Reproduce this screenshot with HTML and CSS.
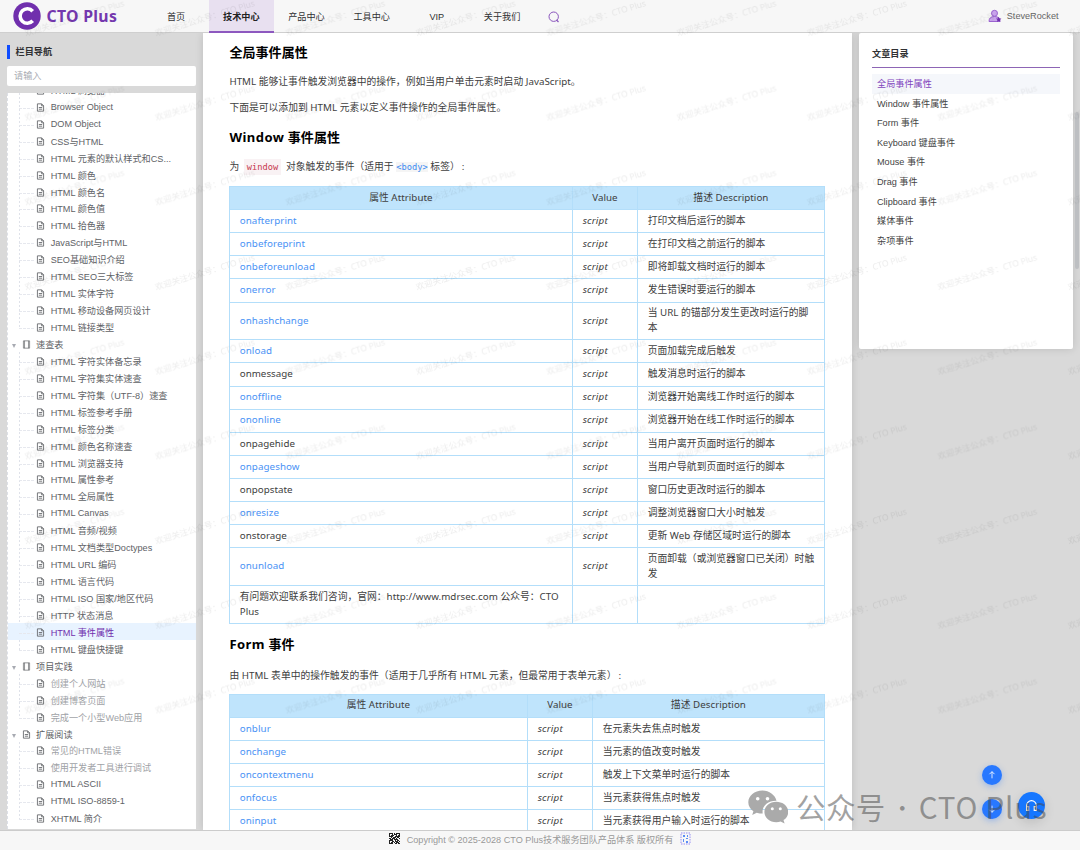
FILE: index.html
```html
<!DOCTYPE html>
<html lang="zh-CN">
<head>
  <meta charset="UTF-8">
  <meta name="viewport" content="width=device-width, initial-scale=1.0">
  <title>HTML 事件属性 - CTO Plus</title>
  <link rel="stylesheet" href="styles.css">
</head>
<body>
<svg class="defs">
  <symbol id="doc" viewBox="0 0 16 16"><path d="M2.5 1.5h7.5l3.5 3.5v9.500h-11zM10 1.500v3.500h3.500M5 8h6M5 11h6" fill="none" stroke="currentColor" stroke-width="1.500"/></symbol>
  <symbol id="book" viewBox="0 0 16 16"><path d="M2.500 1.500h11v13h-11zM4.500 1.500v13M11.500 1.500v13" fill="none" stroke="currentColor" stroke-width="1.200"/></symbol>
</svg>

<header class="header">
  <div class="logo">
    <svg viewBox="0 0 28 28"><circle cx="14" cy="14" r="13.700" fill="#702fad"/><path d="M19.700 9.200A7.200 7.200 0 1 0 19.700 18.800" fill="none" stroke="#fff" stroke-width="3.600"/></svg>
    <span>CTO Plus</span>
  </div>
  <nav class="nav">
    <a>首页</a>
    <a class="active">技术中心</a>
    <a>产品中心</a>
    <a>工具中心</a>
    <a>VIP</a>
    <a>关于我们</a>
  </nav>
  <svg class="search" viewBox="0 0 12 12"><circle cx="5.700" cy="5.700" r="4.700" fill="none" stroke="#8a55bd"/><path d="M8.500 9l2 2" stroke="#8a55bd" stroke-width="1.200"/></svg>
  <div class="user">
    <svg viewBox="0 0 14 14"><path d="M1 13c0-4 2-5.500 5.500-5.500S12 9 12 13z" fill="#c9a3ec"/><path d="M1 12.500c0-3.500 2-5 5.500-5s5.500 1.500 5.500 5z" fill="none" stroke="#9a63cf"/><circle cx="6.500" cy="4.300" r="3" fill="#c9a3ec" stroke="#9a63cf"/><path d="M10.700 7.800l.8 1.600 1.900.2-1.400 1.300.4 1.900-1.700-.9-1.700.9.400-1.900L8 9.600l1.900-.2z" fill="#702fad"/></svg>
    <span>SteveRocket</span>
  </div>
</header>

<div class="page">
  <aside class="sidebar">
    <div class="side-title">栏目导航</div>
    <div class="side-input">请输入</div>
    <div class="tree">
      <div class="tree-inner">
        <div class="group">
          <div class="leaf"><svg><use href="#doc"/></svg>HTML 浏览器</div>
          <div class="leaf"><svg><use href="#doc"/></svg>Browser Object</div>
          <div class="leaf"><svg><use href="#doc"/></svg>DOM Object</div>
          <div class="leaf"><svg><use href="#doc"/></svg>CSS与HTML</div>
          <div class="leaf"><svg><use href="#doc"/></svg>HTML 元素的默认样式和CS...</div>
          <div class="leaf"><svg><use href="#doc"/></svg>HTML 颜色</div>
          <div class="leaf"><svg><use href="#doc"/></svg>HTML 颜色名</div>
          <div class="leaf"><svg><use href="#doc"/></svg>HTML 颜色值</div>
          <div class="leaf"><svg><use href="#doc"/></svg>HTML 拾色器</div>
          <div class="leaf"><svg><use href="#doc"/></svg>JavaScript与HTML</div>
          <div class="leaf"><svg><use href="#doc"/></svg>SEO基础知识介绍</div>
          <div class="leaf"><svg><use href="#doc"/></svg>HTML SEO三大标签</div>
          <div class="leaf"><svg><use href="#doc"/></svg>HTML 实体字符</div>
          <div class="leaf"><svg><use href="#doc"/></svg>HTML 移动设备网页设计</div>
          <div class="leaf"><svg><use href="#doc"/></svg>HTML 链接类型</div>
        </div>
        <div class="branch"><i></i><svg><use href="#book"/></svg>速查表</div>
        <div class="group">
          <div class="leaf"><svg><use href="#doc"/></svg>HTML 字符实体备忘录</div>
          <div class="leaf"><svg><use href="#doc"/></svg>HTML 字符集实体速查</div>
          <div class="leaf"><svg><use href="#doc"/></svg>HTML 字符集（UTF-8）速查</div>
          <div class="leaf"><svg><use href="#doc"/></svg>HTML 标签参考手册</div>
          <div class="leaf"><svg><use href="#doc"/></svg>HTML 标签分类</div>
          <div class="leaf"><svg><use href="#doc"/></svg>HTML 颜色名称速查</div>
          <div class="leaf"><svg><use href="#doc"/></svg>HTML 浏览器支持</div>
          <div class="leaf"><svg><use href="#doc"/></svg>HTML 属性参考</div>
          <div class="leaf"><svg><use href="#doc"/></svg>HTML 全局属性</div>
          <div class="leaf"><svg><use href="#doc"/></svg>HTML Canvas</div>
          <div class="leaf"><svg><use href="#doc"/></svg>HTML 音频/视频</div>
          <div class="leaf"><svg><use href="#doc"/></svg>HTML 文档类型Doctypes</div>
          <div class="leaf"><svg><use href="#doc"/></svg>HTML URL 编码</div>
          <div class="leaf"><svg><use href="#doc"/></svg>HTML 语言代码</div>
          <div class="leaf"><svg><use href="#doc"/></svg>HTML ISO 国家/地区代码</div>
          <div class="leaf"><svg><use href="#doc"/></svg>HTTP 状态消息</div>
          <div class="leaf current"><svg><use href="#doc"/></svg>HTML 事件属性</div>
          <div class="leaf"><svg><use href="#doc"/></svg>HTML 键盘快捷键</div>
        </div>
        <div class="branch"><i></i><svg><use href="#book"/></svg>项目实践</div>
        <div class="group">
          <div class="leaf off"><svg><use href="#doc"/></svg>创建个人网站</div>
          <div class="leaf off"><svg><use href="#doc"/></svg>创建博客页面</div>
          <div class="leaf off"><svg><use href="#doc"/></svg>完成一个小型Web应用</div>
        </div>
        <div class="branch"><i></i><svg><use href="#doc"/></svg>扩展阅读</div>
        <div class="group">
          <div class="leaf off"><svg><use href="#doc"/></svg>常见的HTML错误</div>
          <div class="leaf off"><svg><use href="#doc"/></svg>使用开发者工具进行调试</div>
          <div class="leaf"><svg><use href="#doc"/></svg>HTML ASCII</div>
          <div class="leaf"><svg><use href="#doc"/></svg>HTML ISO-8859-1</div>
          <div class="leaf"><svg><use href="#doc"/></svg>XHTML 简介</div>
        </div>
      </div>
    </div>
  </aside>

  <main class="article">
    <h2>全局事件属性</h2>
    <p>HTML 能够让事件触发浏览器中的操作，例如当用户单击元素时启动 JavaScript。</p>
    <p>下面是可以添加到 HTML 元素以定义事件操作的全局事件属性。</p>
    <h2><span class="latin">Window</span> 事件属性</h2>
    <p>为 <code class="red">window</code> 对象触发的事件（适用于 <code>&lt;body&gt;</code> 标签）<span class="colon">:</span></p>
    <table class="window-table">
      <tr><th class="c1">属性 Attribute</th><th class="c2">Value</th><th>描述 Description</th></tr>
      <tr><td><a>onafterprint</a></td><td><em>script</em></td><td>打印文档后运行的脚本</td></tr>
      <tr><td><a>onbeforeprint</a></td><td><em>script</em></td><td>在打印文档之前运行的脚本</td></tr>
      <tr><td><a>onbeforeunload</a></td><td><em>script</em></td><td>即将卸载文档时运行的脚本</td></tr>
      <tr><td><a>onerror</a></td><td><em>script</em></td><td>发生错误时要运行的脚本</td></tr>
      <tr class="two"><td><a>onhashchange</a></td><td><em>script</em></td><td>当 URL 的锚部分发生更改时运行的脚本</td></tr>
      <tr><td><a>onload</a></td><td><em>script</em></td><td>页面加载完成后触发</td></tr>
      <tr><td>onmessage</td><td><em>script</em></td><td>触发消息时运行的脚本</td></tr>
      <tr><td><a>onoffline</a></td><td><em>script</em></td><td>浏览器开始离线工作时运行的脚本</td></tr>
      <tr><td><a>ononline</a></td><td><em>script</em></td><td>浏览器开始在线工作时运行的脚本</td></tr>
      <tr><td>onpagehide</td><td><em>script</em></td><td>当用户离开页面时运行的脚本</td></tr>
      <tr><td><a>onpageshow</a></td><td><em>script</em></td><td>当用户导航到页面时运行的脚本</td></tr>
      <tr><td>onpopstate</td><td><em>script</em></td><td>窗口历史更改时运行的脚本</td></tr>
      <tr><td><a>onresize</a></td><td><em>script</em></td><td>调整浏览器窗口大小时触发</td></tr>
      <tr><td>onstorage</td><td><em>script</em></td><td>更新 Web 存储区域时运行的脚本</td></tr>
      <tr class="two"><td><a>onunload</a></td><td><em>script</em></td><td>页面卸载（或浏览器窗口已关闭）时触发</td></tr>
      <tr class="two"><td>有问题欢迎联系我们咨询，官网：http://www.mdrsec.com 公众号：CTO Plus</td><td></td><td></td></tr>
    </table>
    <h2><span class="latin">Form</span> 事件</h2>
    <p>由 HTML 表单中的操作触发的事件（适用于几乎所有 HTML 元素，但最常用于表单元素）<span class="colon">:</span></p>
    <table class="form-table">
      <tr><th class="c1">属性 Attribute</th><th class="c2">Value</th><th>描述 Description</th></tr>
      <tr><td><a>onblur</a></td><td><em>script</em></td><td>在元素失去焦点时触发</td></tr>
      <tr><td><a>onchange</a></td><td><em>script</em></td><td>当元素的值改变时触发</td></tr>
      <tr><td><a>oncontextmenu</a></td><td><em>script</em></td><td>触发上下文菜单时运行的脚本</td></tr>
      <tr><td><a>onfocus</a></td><td><em>script</em></td><td>当元素获得焦点时触发</td></tr>
      <tr><td><a>oninput</a></td><td><em>script</em></td><td>当元素获得用户输入时运行的脚本</td></tr>
    </table>
  </main>

  <aside class="toc">
    <h3>文章目录</h3>
    <a class="on">全局事件属性</a>
    <a>Window 事件属性</a>
    <a>Form 事件</a>
    <a>Keyboard 键盘事件</a>
    <a>Mouse 事件</a>
    <a>Drag 事件</a>
    <a>Clipboard 事件</a>
    <a>媒体事件</a>
    <a>杂项事件</a>
  </aside>
  <div class="scrollbar"></div>
</div>

<footer class="footer">
  <svg viewBox="0 0 11 11"><path d="M0 .5h4M5 .5h1M7 .5h4M0 1.500h1M3 1.500h1M5 1.500h3M10 1.500h1M0 2.500h1M2 2.500h3M7 2.500h1M9 2.500h2M0 3.500h4M6 3.500h5M2 4.500h1M4 4.500h3M8 4.500h2M0 5.500h2M3 5.500h3M7 5.500h1M10 5.500h1M1 6.500h3M5 6.500h4M0 7.500h4M6 7.500h1M8 7.500h2M0 8.500h1M3 8.500h2M6 8.500h3M10 8.500h1M0 9.500h1M2 9.500h2M5 9.500h1M7 9.500h3M0 10.500h4M6 10.500h2M9 10.500h2" stroke="#222"/></svg>
  <span>Copyright © 2025-2028 CTO Plus技术服务团队产品体系 版权所有</span>
  <svg viewBox="0 0 11 13"><path d="M1 1h9v11H1z" fill="none" stroke="#968df2" stroke-dasharray="1.500 1"/><path d="M3 3h2v2H3zM7 3h1v2H7zM3 7h1v3H3zM6 6h2v1H6zM6 9h2v2H6z" fill="#5a8df5"/></svg>
</footer>

<svg class="watermark">
  <pattern id="wm" x="5" y="-6" width="130.400" height="84.700" patternUnits="userSpaceOnUse">
    <text x="21" y="42" transform="rotate(-17 21 42)">欢迎关注公众号：CTO Plus</text>
  </pattern>
  <rect width="1080" height="720" fill="url(#wm)"/>
</svg>

<div class="float-btn up"><svg viewBox="0 0 12 12"><path d="M6 10V2M3 5l3-3 3 3"/></svg></div>
<div class="float-btn down"><svg viewBox="0 0 12 12"><path d="M6 2v8M3 7l3 3 3-3"/></svg></div>
<div class="float-btn help"><svg viewBox="0 0 12 12"><path d="M1.500 9V6a4.500 4.500 0 0 1 9 0v3M1.500 7h2v3.500h-2zM8.500 7h2v3.500h-2z"/></svg></div>

<div class="brand">
  <svg viewBox="0 0 40 34"><path d="M14.500.5C6.500.5.3 5.700.3 12.200c0 3.700 2 6.900 5.100 9L4.200 25l4.500-2.300c1.900.6 4 .9 6 .9C13.500 16 20 10.500 28.500 10.700 27 4.800 21.300.5 14.500.5z"/><path d="M28.300 11.800c-6.600 0-11.900 4.500-11.900 10.200s5.300 10.200 11.900 10.200c1.600 0 3-.2 4.300-.7l4 2.100-1.100-3.500c2.900-1.900 4.700-4.800 4.700-8.100 0-5.700-5.300-10.200-11.900-10.200z"/><g fill="#fff"><circle cx="9.700" cy="8.700" r="1.800"/><circle cx="19.500" cy="8.700" r="1.800"/><circle cx="24.300" cy="18.800" r="1.500"/><circle cx="32.300" cy="18.800" r="1.500"/></g></svg>
  <span class="cn">公众号</span><span class="dot">·</span><span class="en">CTO Plus</span>
</div>
</body>
</html>
```
FILE: styles.css
```css
:root {
  --purple: #702fad;
  --line: #b3defa;
  --bg: #d9d9d9;
}
* {
  box-sizing: border-box;
}
body {
  margin: 0;
  width: 1080px;
  height: 850px;
  overflow: hidden;
  display: flex;
  flex-direction: column;
  background: var(--bg);
  font-family: "Liberation Sans", "Noto Sans CJK SC", sans-serif;
  font-size: 9.13px;
  color: #303133;
}
.defs {
  display: none;
}
.header {
  height: 33px;
  flex: none;
  display: flex;
  align-items: center;
  background: #f7f7f7;
  border-bottom: 1px solid #cfcfcf;
  padding-left: 12.5px;
  position: relative;
  z-index: 2;
}
.logo {
  width: 131px;
  display: flex;
  align-items: center;
  gap: 6px;
  font: bold 15.8px/20px "Noto Sans", sans-serif;
  letter-spacing: 0.3px;
  color: #7438ae;
}
.logo svg {
  width: 28px;
  height: 28px;
}
.nav {
  display: flex;
  height: 33px;
}
.nav a {
  width: 65.2px;
  line-height: 34px;
  text-align: center;
}
.nav .active {
  background: #e8e0f0;
  border-bottom: 2px solid #8d58bf;
  font-weight: bold;
  color: #222;
}
.search {
  width: 12px;
  height: 12px;
  margin: 1px 0 0 13px;
}
.user {
  margin-left: auto;
  margin-right: 21.5px;
  display: flex;
  align-items: center;
  gap: 5px;
  color: #666;
}
.user svg {
  width: 14px;
  height: 14px;
}
.page {
  height: 797px;
  display: flex;
  align-items: flex-start;
}
.sidebar {
  width: 203px;
  padding: 12px 7px 0;
}
.side-title {
  height: 14px;
  line-height: 15px;
  border-left: 3px solid #0f4cff;
  padding-left: 5.5px;
  font-weight: bold;
}
.side-input {
  width: 188.5px;
  height: 20px;
  line-height: 21px;
  margin: 7px 0;
  padding-left: 7px;
  background: #fff;
  border-radius: 2px;
  color: #a8abb2;
}
.tree {
  width: 188.5px;
  height: 736px;
  overflow: hidden;
  background: #fff;
  border-left: 1px dashed #dcdfe6;
  color: #606266;
}
.tree-inner {
  margin-top: -11.6px;
}
.leaf, .branch {
  height: 16.95px;
  display: flex;
  align-items: center;
  white-space: nowrap;
}
.leaf svg, .branch svg {
  width: 9px;
  height: 9px;
  flex: none;
  margin: 1px 5.5px 0 0;
}
.group {
  background: repeating-linear-gradient(#dfe2ea 0 2px, transparent 2px 4px) 11px 0 / 1px calc(100% - 7px) no-repeat;
}
.leaf::before {
  content: "";
  width: 15px;
  margin: 3px 2px 0 11.2px;
  border-top: 1px dashed #e6e8ee;
}
.current {
  background: #e8f3ff;
  color: var(--purple);
}
.current svg {
  color: #606266;
}
.off {
  color: #a0a2a6;
}
.off svg {
  color: #606266;
}
.branch i {
  border: 2.5px solid transparent;
  border-top: 4px solid #a8abb2;
  border-bottom: 0;
  margin: 4px 6px 0 4px;
}
.branch svg {
  margin-right: 5px;
}
.article {
  width: 649px;
  height: 797px;
  overflow: hidden;
  padding: 10px 27px 0 26.4px;
  background: #fff;
  font-family: "Noto Sans", "Noto Sans CJK SC", sans-serif;
  font-size: 9.78px;
  letter-spacing: 0.03px;
  color: #404040;
  box-shadow: 0 0 8px rgba(0,0,0,0.13);
}
.article h2 {
  margin: 0 0 13px;
  font-size: 13.04px;
  line-height: 18px;
  color: #000;
}
.latin {
  letter-spacing: 0.45px;
}
.article p {
  margin: 0 0 11px;
  line-height: 15px;
}
.article p + h2 {
  margin-top: 13px;
}
.colon {
  margin-left: 2px;
}
code {
  font-family: "DejaVu Sans Mono", monospace;
  font-size: 8.7px;
  color: #3d8bf2;
  background: #f5f5f5;
}
.red {
  color: #c7384f;
  background: #f9f2f4;
  padding: 3px;
  margin: 0 2px;
}
table {
  width: 596px;
  margin-left: -0.5px;
  table-layout: fixed;
  border-collapse: collapse;
}
.article p + table {
  margin-top: 11px;
}
.article table + h2 {
  margin-top: 11.4px;
  margin-bottom: 14.4px;
}
th, td {
  height: 23.12px;
  padding: 0 8px 0 9.8px;
  border: 1px solid var(--line);
  line-height: 14.67px;
  text-align: left;
}
th {
  padding: 0;
  background: #bfe4fc;
  font-weight: normal;
  text-align: center;
}
.two td {
  height: 37.8px;
}
.window-table .c1 {
  width: 343px;
}
.form-table .c1 {
  width: 298px;
}
.c2 {
  width: 65px;
}
td a {
  color: #4a92f5;
  letter-spacing: 0.09px;
}
em {
  letter-spacing: 0.2px;
}
.toc {
  width: 214.5px;
  height: 315.5px;
  margin: 0 0 0 6.5px;
  padding: 13px 13.5px;
  background: #fff;
  border-radius: 2px;
  box-shadow: 0 0 8px rgba(0,0,0,0.13);
}
.toc h3 {
  margin: 0 0 6px;
  height: 22px;
  line-height: 16px;
  border-bottom: 1px solid #8d65b5;
  font-size: 9.13px;
}
.toc a {
  display: block;
  height: 19.6px;
  line-height: 21px;
  padding-left: 5px;
  color: #444;
}
.toc .on {
  background: #f5f7fb;
  color: #8145bd;
}
.scrollbar {
  width: 4px;
  height: 157px;
  margin: 79px 0 0 2px;
  border-radius: 2px;
  background: #bdbfc2;
}
.footer {
  height: 20px;
  display: flex;
  justify-content: center;
  align-items: center;
  gap: 6.5px;
  padding-bottom: 4px;
  background: #f7f7f7;
  border-top: 1px solid #ccc;
  color: #999;
  position: relative;
}
.footer svg {
  width: 11px;
  height: 13px;
}
.watermark {
  position: absolute;
  left: 0;
  top: 0;
  z-index: 3;
  width: 1080px;
  height: 720px;
  pointer-events: none;
}
.watermark text {
  font: 8.5px "Noto Sans", "Noto Sans CJK SC", sans-serif;
  fill: rgba(0,0,0,0.08);
}
.float-btn {
  position: absolute;
  left: 982px;
  width: 20px;
  height: 20px;
  border-radius: 50%;
  display: flex;
  align-items: center;
  justify-content: center;
  background: #2878ff;
  box-shadow: 0 2px 6px rgba(40,120,255,0.35);
}
.float-btn svg {
  width: 10px;
  height: 10px;
  fill: none;
  stroke: #fff;
}
.up {
  top: 765px;
}
.down {
  top: 799px;
}
.help {
  left: 1018px;
  top: 792px;
  width: 27px;
  height: 27px;
  background: #1677ff;
  box-shadow: 0 4px 12px rgba(0,0,0,0.12);
}
.help svg {
  width: 13px;
  height: 13px;
}
.brand {
  position: absolute;
  left: 748px;
  top: 785px;
  z-index: 4;
  height: 42px;
  display: flex;
  align-items: center;
  font: 29.5px/42px "Noto Sans CJK SC", sans-serif;
  color: rgba(70,70,70,0.5);
  white-space: nowrap;
}
.brand svg {
  width: 40px;
  height: 34px;
  margin: 2px 8px 0 0;
  fill: #aaa;
}
.brand .cn {
  letter-spacing: 0.4px;
}
.brand .dot {
  width: 33px;
  font-size: 22px;
  text-align: center;
}
.brand .en {
  letter-spacing: 0.8px;
}
```
